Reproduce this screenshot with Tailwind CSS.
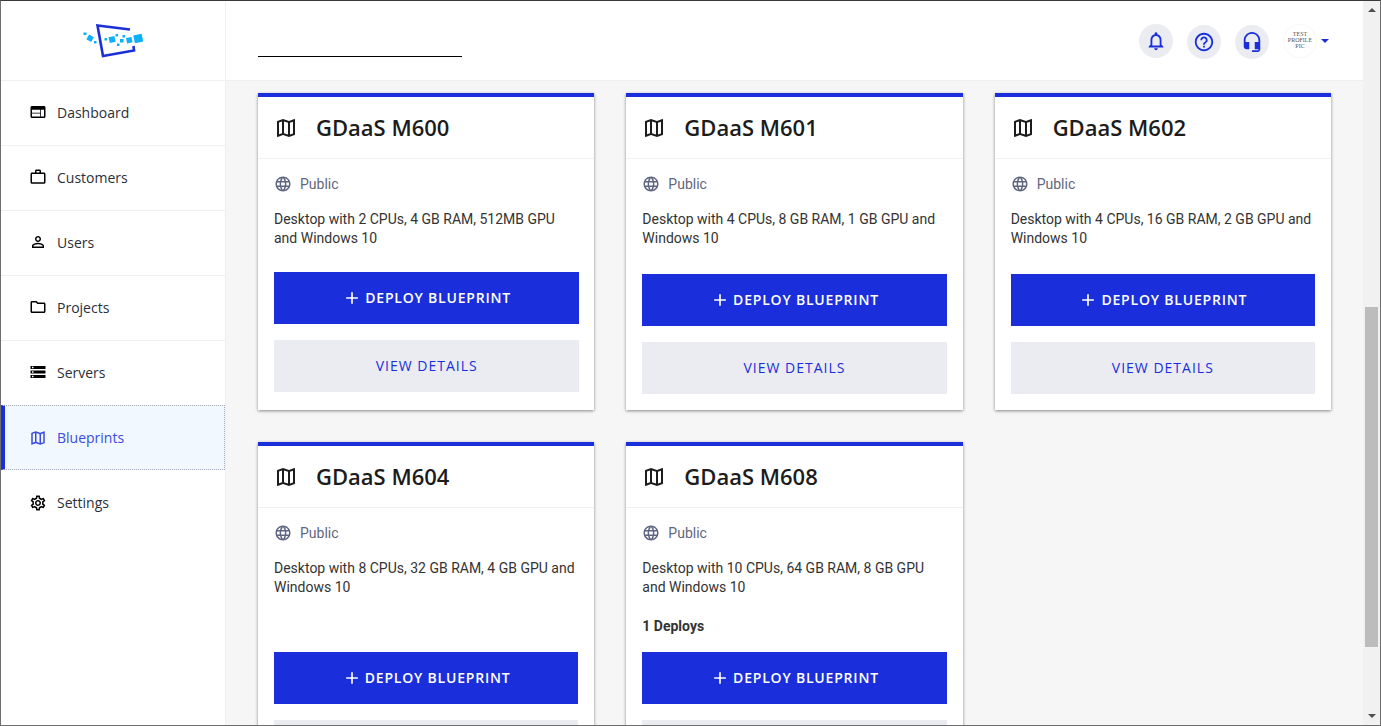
<!DOCTYPE html>
<html lang="en">

<head>
    <meta charset="UTF-8">
    <meta name="viewport" content="width=device-width, initial-scale=1.0">
    <title>Blueprints</title>
    <script src="https://cdn.jsdelivr.net/npm/@tailwindcss/browser@4"></script>
</head>

<body class="bg-white font-['Open_Sans',sans-serif] overflow-hidden">
<div class="flex w-[1381px] h-[726px] overflow-hidden border border-[#6e6e6e] border-t-[#3a3a3a]">

    <!-- sidebar -->
    <aside class="w-[225px] shrink-0 bg-white border-r border-[#eeeff3] flex flex-col">
        <div class="h-[80px] shrink-0 border-b border-[#eeeff3]">
            <svg width="224" height="79" viewBox="1 1 224 79" class="block">
                <path d="M130 29.5L97.5 25.5L103 56L134 50.5L133.5 46" fill="none" stroke="#1b30d8" stroke-width="2.6"/>
                <g fill="#0fb0fb">
                    <rect x="134" y="34.5" width="8.5" height="8" transform="rotate(-12 138 38.5)"/>
                    <rect x="126.5" y="37.5" width="5.5" height="5.5" transform="rotate(-12 129 40)"/>
                    <rect x="109" y="36.5" width="6" height="6" transform="rotate(-12 112 39)"/>
                    <rect x="87.5" y="35.5" width="5.5" height="5.5" transform="rotate(30 90 38)"/>
                    <rect x="83.5" y="32.5" width="3" height="2.5"/>
                    <rect x="94" y="41" width="2.5" height="2.5"/>
                    <rect x="104.5" y="38" width="2.5" height="2.5"/>
                    <rect x="115.5" y="34" width="2.5" height="2.5"/>
                    <rect x="117" y="43.5" width="2.5" height="2.5"/>
                    <rect x="122.5" y="35" width="2.5" height="2.5"/>
                    <rect x="120" y="39" width="3.5" height="3.5"/>
                </g>
            </svg>
        </div>
        <nav class="flex flex-col text-[14px] text-[#2a2f3a]">
            <a href="#" class="h-[65px] flex items-center gap-[10px] pl-[28px] pb-[2px] border-b border-[#eeeff3]">
                <svg class="w-[18px] h-[18px]" viewBox="0 0 24 24" fill="#000"><path d="M20 4H4c-1.1 0-2 .9-2 2v12c0 1.1.9 2 2 2h16c1.1 0 2-.9 2-2V6c0-1.1-.9-2-2-2zm-5 14H4v-4h11v4zm0-5H4V9h11v4zm5 5h-4V9h4v9z"/></svg>
                <span>Dashboard</span>
            </a>
            <a href="#" class="h-[65px] flex items-center gap-[10px] pl-[28px] pb-[2px] border-b border-[#eeeff3]">
                <svg class="w-[18px] h-[18px]" viewBox="0 0 24 24" fill="#000"><path d="M14 6V4h-4v2h4zM4 8v11h16V8H4zm16-2c1.11 0 2 .89 2 2v11c0 1.11-.89 2-2 2H4c-1.11 0-2-.89-2-2l.01-11c0-1.11.88-2 1.99-2h4V4c0-1.11.89-2 2-2h4c1.11 0 2 .89 2 2v2h4z"/></svg>
                <span>Customers</span>
            </a>
            <a href="#" class="h-[65px] flex items-center gap-[10px] pl-[28px] pb-[2px] border-b border-[#eeeff3]">
                <svg class="w-[18px] h-[18px]" viewBox="0 0 24 24" fill="#000"><path d="M12 5.9c1.16 0 2.1.94 2.1 2.1s-.94 2.1-2.1 2.1S9.9 9.16 9.9 8s.94-2.1 2.1-2.1m0 9c2.97 0 6.1 1.46 6.1 2.1v1.1H5.9V17c0-.64 3.13-2.1 6.1-2.1M12 4C9.79 4 8 5.79 8 8s1.79 4 4 4 4-1.79 4-4-1.79-4-4-4zm0 9c-2.67 0-8 1.34-8 4v3h16v-3c0-2.66-5.33-4-8-4z"/></svg>
                <span>Users</span>
            </a>
            <a href="#" class="h-[65px] flex items-center gap-[10px] pl-[28px] pb-[2px] border-b border-[#eeeff3]">
                <svg class="w-[18px] h-[18px]" viewBox="0 0 24 24" fill="#000"><path d="M9.17 6l2 2H20v10H4V6h5.17M10 4H4c-1.1 0-1.99.9-1.99 2L2 18c0 1.1.9 2 2 2h16c1.1 0 2-.9 2-2V8c0-1.1-.9-2-2-2h-8l-2-2z"/></svg>
                <span>Projects</span>
            </a>
            <a href="#" class="h-[64px] flex items-center gap-[10px] pl-[28px] pb-[2px]">
                <svg class="w-[18px] h-[18px]" viewBox="0 0 24 24" fill="#000"><path d="M2 20h20v-4H2v4zm2-3h2v2H4v-2zM2 4v4h20V4H2zm4 3H4V5h2v2zm-4 7h20v-4H2v4zm2-3h2v2H4v-2z"/></svg>
                <span>Servers</span>
            </a>
            <!-- active item -->
            <a href="#" class="h-[65px] flex items-center gap-[10px] pl-[24px] bg-[#f1f8ff] text-[#3a4be0] border-l-4 border-l-[#1a2fdb] border-y border-r border-y-[#a3a9b8] border-r-[#a3a9b8] border-dotted [border-left-style:solid]">
                <svg class="w-[18px] h-[18px]" viewBox="0 0 24 24" fill="#3a4be0"><path d="M20.5 3l-.16.03L15 5.1 9 3 3.36 4.9c-.21.07-.36.25-.36.48V20.5c0 .28.22.5.5.5l.16-.03L9 18.9l6 2.1 5.64-1.9c.21-.07.36-.25.36-.48V3.5c0-.28-.22-.5-.5-.5zM10 5.47l4 1.4v11.66l-4-1.4V5.47zm-5 .99l3-1.01v11.7l-3 1.16V6.46zm14 11.08l-3 1.01V6.86l3-1.16v11.84z"/></svg>
                <span>Blueprints</span>
            </a>
            <a href="#" class="h-[65px] flex items-center gap-[10px] pl-[28px]">
                <svg class="w-[18px] h-[18px]" viewBox="0 0 24 24" fill="#000"><path d="M19.43 12.98c.04-.32.07-.64.07-.98 0-.34-.03-.66-.07-.98l2.11-1.65c.19-.15.24-.42.12-.64l-2-3.46c-.09-.16-.26-.25-.44-.25-.06 0-.12.01-.17.03l-2.49 1c-.52-.4-1.08-.73-1.69-.98l-.38-2.65C14.46 2.18 14.25 2 14 2h-4c-.25 0-.46.18-.49.42l-.38 2.65c-.61.25-1.17.59-1.69.98l-2.49-1c-.06-.02-.12-.03-.18-.03-.17 0-.34.09-.43.25l-2 3.46c-.13.22-.07.49.12.64l2.11 1.65c-.04.32-.07.65-.07.98 0 .33.03.66.07.98l-2.11 1.65c-.19.15-.24.42-.12.64l2 3.46c.09.16.26.25.44.25.06 0 .12-.01.17-.03l2.49-1c.52.4 1.08.73 1.69.98l.38 2.65c.03.24.24.42.49.42h4c.25 0 .46-.18.49-.42l.38-2.65c.61-.25 1.17-.59 1.69-.98l2.49 1c.06.02.12.03.18.03.17 0 .34-.09.43-.25l2-3.46c.12-.22.07-.49-.12-.64l-2.11-1.65zm-1.98-1.71c.04.31.05.52.05.73 0 .21-.02.43-.05.73l-.14 1.13.89.7 1.08.84-.7 1.21-1.27-.51-1.04-.42-.9.68c-.43.32-.84.56-1.25.73l-1.06.43-.16 1.13-.2 1.35h-1.4l-.19-1.35-.16-1.13-1.06-.43c-.43-.18-.83-.41-1.23-.71l-.91-.7-1.06.43-1.27.51-.7-1.21 1.08-.84.89-.7-.14-1.13c-.03-.31-.05-.54-.05-.74s.02-.43.05-.73l.14-1.13-.89-.7-1.08-.84.7-1.21 1.27.51 1.04.42.9-.68c.43-.32.84-.56 1.25-.73l1.06-.43.16-1.13.2-1.35h1.39l.19 1.35.16 1.13 1.06.43c.43.18.83.41 1.23.71l.91.7 1.06-.43 1.27-.51.7 1.21-1.07.85-.89.7.14 1.13zM12 8c-2.21 0-4 1.79-4 4s1.79 4 4 4 4-1.79 4-4-1.79-4-4-4zm0 6c-1.1 0-2-.9-2-2s.9-2 2-2 2 .9 2 2-.9 2-2 2z"/></svg>
                <span>Settings</span>
            </a>
        </nav>
    </aside>

    <!-- main column -->
    <div class="flex-1 min-w-0 flex flex-col bg-[#f6f6f6]">
        <header class="h-[80px] shrink-0 bg-white border-b border-[#eeeff3] flex items-start justify-between pl-[32px] pr-[34px]">
            <div class="w-[204px] h-[56px] border-b border-black"></div>
            <div class="flex items-start gap-[14px] pt-[24px]">
                <button class="w-[34px] h-[34px] rounded-full bg-[#ebecf1] flex items-center justify-center -mt-[1px]">
                    <svg class="w-[22px] h-[22px]" viewBox="0 0 24 24" fill="#1a2fdb"><path d="M12 22c1.1 0 2-.9 2-2h-4c0 1.1.9 2 2 2zm6-6v-5c0-3.07-1.63-5.64-4.5-6.32V4c0-.83-.67-1.5-1.5-1.5s-1.5.67-1.5 1.5v.68C7.64 5.36 6 7.92 6 11v5l-2 2v1h16v-1l-2-2zm-2 1H8v-6c0-2.48 1.51-4.5 4-4.5s4 2.02 4 4.5v6z"/></svg>
                </button>
                <button class="w-[34px] h-[34px] rounded-full bg-[#ebecf1] flex items-center justify-center">
                    <svg class="w-[22px] h-[22px]" viewBox="0 0 24 24" fill="#1a2fdb"><path d="M11 18h2v-2h-2v2zm1-16C6.48 2 2 6.48 2 12s4.48 10 10 10 10-4.48 10-10S17.52 2 12 2zm0 18c-4.41 0-8-3.59-8-8s3.59-8 8-8 8 3.59 8 8-3.59 8-8 8zm0-14c-2.21 0-4 1.79-4 4h2c0-1.1.9-2 2-2s2 .9 2 2c0 2-3 1.75-3 5h2c0-2.25 3-2.5 3-5 0-2.21-1.79-4-4-4z"/></svg>
                </button>
                <button class="w-[34px] h-[34px] rounded-full bg-[#ebecf1] flex items-center justify-center">
                    <svg class="w-[22px] h-[22px]" viewBox="0 0 24 24" fill="#1a2fdb"><path d="M12 1c-4.97 0-9 4.03-9 9v7c0 1.66 1.34 3 3 3h3v-8H5v-2c0-3.87 3.13-7 7-7s7 3.13 7 7v2h-4v8h4v1h-7v2h6c1.66 0 3-1.34 3-3V10c0-4.97-4.03-9-9-9z"/></svg>
                </button>
                <div class="flex items-center gap-[4px] -mt-[1px]">
                    <div class="w-[34px] h-[34px] pb-[2px] rounded-full bg-white border border-[#f7f7f9] flex items-center justify-center text-center font-['Liberation_Serif',serif] text-[6px] leading-[6px] text-[#555]">TEST PROFILE PIC</div>
                    <div class="w-0 h-0 border-x-[4px] border-x-transparent border-t-[4px] border-t-[#1a2fdb]"></div>
                </div>
            </div>
        </header>

        <main class="flex-1 min-h-0 overflow-hidden pt-[12px] pl-[32px] pr-[32px]">
            <div class="grid grid-cols-3 gap-[32px] font-['Roboto',sans-serif]">

                <section class="bg-white border-t-4 border-[#1a2fdb] shadow-[0_1px_3px_rgba(0,0,0,0.45)] flex flex-col pb-[18px]">
                    <div class="h-[62px] shrink-0 border-b border-[#f1f1f1] flex items-center gap-[18px] px-[16px]">
                        <svg class="w-[24px] h-[24px]" viewBox="0 0 24 24" fill="#1c1c1c"><path d="M20.5 3l-.16.03L15 5.1 9 3 3.36 4.9c-.21.07-.36.25-.36.48V20.5c0 .28.22.5.5.5l.16-.03L9 18.9l6 2.1 5.64-1.9c.21-.07.36-.25.36-.48V3.5c0-.28-.22-.5-.5-.5zM10 5.47l4 1.4v11.66l-4-1.4V5.47zm-5 .99l3-1.01v11.7l-3 1.16V6.46zm14 11.08l-3 1.01V6.86l3-1.16v11.84z"/></svg>
                        <h2 class="font-['Open_Sans',sans-serif] text-[22px] font-semibold text-[#1c1c1c]">GDaaS M600</h2>
                    </div>
                    <div class="px-[16px] pt-[15px] flex items-center gap-[8px] text-[14px] leading-[20px] text-[#5f6780]">
                        <svg class="w-[18px] h-[18px]" viewBox="0 0 24 24" fill="#5f6780"><path d="M11.99 2C6.47 2 2 6.48 2 12s4.47 10 9.99 10C17.52 22 22 17.52 22 12S17.52 2 11.99 2zm6.93 6h-2.95c-.32-1.25-.78-2.45-1.38-3.56 1.84.63 3.37 1.91 4.33 3.56zM12 4.04c.83 1.2 1.48 2.53 1.91 3.96h-3.82c.43-1.43 1.08-2.76 1.91-3.96zM4.26 14C4.1 13.36 4 12.69 4 12s.1-1.36.26-2h3.38c-.08.66-.14 1.32-.14 2 0 .68.06 1.34.14 2H4.26zm.82 2h2.95c.32 1.25.78 2.45 1.38 3.56-1.84-.63-3.37-1.9-4.33-3.56zm2.95-8H5.08c.96-1.66 2.49-2.93 4.33-3.56C8.81 5.55 8.35 6.75 8.03 8zM12 19.96c-.83-1.2-1.48-2.53-1.91-3.96h3.82c-.43 1.43-1.08 2.76-1.91 3.96zM14.34 14H9.66c-.09-.66-.16-1.32-.16-2 0-.68.07-1.35.16-2h4.68c.09.65.16 1.32.16 2 0 .68-.07 1.34-.16 2zm.25 5.56c.6-1.11 1.06-2.31 1.38-3.56h2.95c-.96 1.65-2.49 2.93-4.33 3.56zM16.36 14c.08-.66.14-1.32.14-2 0-.68-.06-1.34-.14-2h3.38c.16.64.26 1.31.26 2s-.1 1.36-.26 2h-3.38z"/></svg>
                        <span>Public</span>
                    </div>
                    <p class="px-[16px] mt-[16px] text-[14px] leading-[19px] text-[#333]">Desktop with 2 CPUs, 4 GB RAM, 512MB GPU and Windows 10</p>
                    <div class="mt-auto pl-[16px] pr-[15px] pt-[24px] flex flex-col gap-[16px] font-['Open_Sans',sans-serif] text-[14px]">
                        <button class="h-[52px] pb-[2px] bg-[#1a2fdb] text-white font-semibold tracking-[0.8px] flex items-center justify-center gap-[3px]">
                            <svg class="w-[20px] h-[20px] mt-[2px]" viewBox="0 0 24 24" fill="#fff"><path d="M19 13h-6v6h-2v-6H5v-2h6V5h2v6h6v2z"/></svg>
                            <span>DEPLOY BLUEPRINT</span>
                        </button>
                        <button class="h-[52px] pb-[2px] bg-[#ebecf1] text-[#1a2fdb] tracking-[1px]">VIEW DETAILS</button>
                    </div>
                </section>

                <section class="bg-white border-t-4 border-[#1a2fdb] shadow-[0_1px_3px_rgba(0,0,0,0.45)] flex flex-col pb-[16px]">
                    <div class="h-[62px] shrink-0 border-b border-[#f1f1f1] flex items-center gap-[18px] px-[16px]">
                        <svg class="w-[24px] h-[24px]" viewBox="0 0 24 24" fill="#1c1c1c"><path d="M20.5 3l-.16.03L15 5.1 9 3 3.36 4.9c-.21.07-.36.25-.36.48V20.5c0 .28.22.5.5.5l.16-.03L9 18.9l6 2.1 5.64-1.9c.21-.07.36-.25.36-.48V3.5c0-.28-.22-.5-.5-.5zM10 5.47l4 1.4v11.66l-4-1.4V5.47zm-5 .99l3-1.01v11.7l-3 1.16V6.46zm14 11.08l-3 1.01V6.86l3-1.16v11.84z"/></svg>
                        <h2 class="font-['Open_Sans',sans-serif] text-[22px] font-semibold text-[#1c1c1c]">GDaaS M601</h2>
                    </div>
                    <div class="px-[16px] pt-[15px] flex items-center gap-[8px] text-[14px] leading-[20px] text-[#5f6780]">
                        <svg class="w-[18px] h-[18px]" viewBox="0 0 24 24" fill="#5f6780"><path d="M11.99 2C6.47 2 2 6.48 2 12s4.47 10 9.99 10C17.52 22 22 17.52 22 12S17.52 2 11.99 2zm6.93 6h-2.95c-.32-1.25-.78-2.45-1.38-3.56 1.84.63 3.37 1.91 4.33 3.56zM12 4.04c.83 1.2 1.48 2.53 1.91 3.96h-3.82c.43-1.43 1.08-2.76 1.91-3.96zM4.26 14C4.1 13.36 4 12.69 4 12s.1-1.36.26-2h3.38c-.08.66-.14 1.32-.14 2 0 .68.06 1.34.14 2H4.26zm.82 2h2.95c.32 1.25.78 2.45 1.38 3.56-1.84-.63-3.37-1.9-4.33-3.56zm2.95-8H5.08c.96-1.66 2.49-2.93 4.33-3.56C8.81 5.55 8.35 6.75 8.03 8zM12 19.96c-.83-1.2-1.48-2.53-1.91-3.96h3.82c-.43 1.43-1.08 2.76-1.91 3.96zM14.34 14H9.66c-.09-.66-.16-1.32-.16-2 0-.68.07-1.35.16-2h4.68c.09.65.16 1.32.16 2 0 .68-.07 1.34-.16 2zm.25 5.56c.6-1.11 1.06-2.31 1.38-3.56h2.95c-.96 1.65-2.49 2.93-4.33 3.56zM16.36 14c.08-.66.14-1.32.14-2 0-.68-.06-1.34-.14-2h3.38c.16.64.26 1.31.26 2s-.1 1.36-.26 2h-3.38z"/></svg>
                        <span>Public</span>
                    </div>
                    <p class="px-[16px] mt-[16px] text-[14px] leading-[19px] text-[#333]">Desktop with 4 CPUs, 8 GB RAM, 1 GB GPU and Windows 10</p>
                    <div class="mt-auto px-[16px] pt-[26px] flex flex-col gap-[16px] font-['Open_Sans',sans-serif] text-[14px]">
                        <button class="h-[52px] pb-[2px] bg-[#1a2fdb] text-white font-semibold tracking-[0.8px] flex items-center justify-center gap-[3px]">
                            <svg class="w-[20px] h-[20px] mt-[2px]" viewBox="0 0 24 24" fill="#fff"><path d="M19 13h-6v6h-2v-6H5v-2h6V5h2v6h6v2z"/></svg>
                            <span>DEPLOY BLUEPRINT</span>
                        </button>
                        <button class="h-[52px] pb-[2px] bg-[#ebecf1] text-[#1a2fdb] tracking-[1px]">VIEW DETAILS</button>
                    </div>
                </section>

                <section class="bg-white border-t-4 border-[#1a2fdb] shadow-[0_1px_3px_rgba(0,0,0,0.45)] flex flex-col pb-[16px]">
                    <div class="h-[62px] shrink-0 border-b border-[#f1f1f1] flex items-center gap-[18px] px-[16px]">
                        <svg class="w-[24px] h-[24px]" viewBox="0 0 24 24" fill="#1c1c1c"><path d="M20.5 3l-.16.03L15 5.1 9 3 3.36 4.9c-.21.07-.36.25-.36.48V20.5c0 .28.22.5.5.5l.16-.03L9 18.9l6 2.1 5.64-1.9c.21-.07.36-.25.36-.48V3.5c0-.28-.22-.5-.5-.5zM10 5.47l4 1.4v11.66l-4-1.4V5.47zm-5 .99l3-1.01v11.7l-3 1.16V6.46zm14 11.08l-3 1.01V6.86l3-1.16v11.84z"/></svg>
                        <h2 class="font-['Open_Sans',sans-serif] text-[22px] font-semibold text-[#1c1c1c]">GDaaS M602</h2>
                    </div>
                    <div class="px-[16px] pt-[15px] flex items-center gap-[8px] text-[14px] leading-[20px] text-[#5f6780]">
                        <svg class="w-[18px] h-[18px]" viewBox="0 0 24 24" fill="#5f6780"><path d="M11.99 2C6.47 2 2 6.48 2 12s4.47 10 9.99 10C17.52 22 22 17.52 22 12S17.52 2 11.99 2zm6.93 6h-2.95c-.32-1.25-.78-2.45-1.38-3.56 1.84.63 3.37 1.91 4.33 3.56zM12 4.04c.83 1.2 1.48 2.53 1.91 3.96h-3.82c.43-1.43 1.08-2.76 1.91-3.96zM4.26 14C4.1 13.36 4 12.69 4 12s.1-1.36.26-2h3.38c-.08.66-.14 1.32-.14 2 0 .68.06 1.34.14 2H4.26zm.82 2h2.95c.32 1.25.78 2.45 1.38 3.56-1.84-.63-3.37-1.9-4.33-3.56zm2.95-8H5.08c.96-1.66 2.49-2.93 4.33-3.56C8.81 5.55 8.35 6.75 8.03 8zM12 19.96c-.83-1.2-1.48-2.53-1.91-3.96h3.82c-.43 1.43-1.08 2.76-1.91 3.96zM14.34 14H9.66c-.09-.66-.16-1.32-.16-2 0-.68.07-1.35.16-2h4.68c.09.65.16 1.32.16 2 0 .68-.07 1.34-.16 2zm.25 5.56c.6-1.11 1.06-2.31 1.38-3.56h2.95c-.96 1.65-2.49 2.93-4.33 3.56zM16.36 14c.08-.66.14-1.32.14-2 0-.68-.06-1.34-.14-2h3.38c.16.64.26 1.31.26 2s-.1 1.36-.26 2h-3.38z"/></svg>
                        <span>Public</span>
                    </div>
                    <p class="px-[16px] mt-[16px] text-[14px] leading-[19px] text-[#333]">Desktop with 4 CPUs, 16 GB RAM, 2 GB GPU and Windows 10</p>
                    <div class="mt-auto px-[16px] pt-[26px] flex flex-col gap-[16px] font-['Open_Sans',sans-serif] text-[14px]">
                        <button class="h-[52px] pb-[2px] bg-[#1a2fdb] text-white font-semibold tracking-[0.8px] flex items-center justify-center gap-[3px]">
                            <svg class="w-[20px] h-[20px] mt-[2px]" viewBox="0 0 24 24" fill="#fff"><path d="M19 13h-6v6h-2v-6H5v-2h6V5h2v6h6v2z"/></svg>
                            <span>DEPLOY BLUEPRINT</span>
                        </button>
                        <button class="h-[52px] pb-[2px] bg-[#ebecf1] text-[#1a2fdb] tracking-[1px]">VIEW DETAILS</button>
                    </div>
                </section>

                <section class="bg-white border-t-4 border-[#1a2fdb] shadow-[0_1px_3px_rgba(0,0,0,0.45)] flex flex-col pb-[16px]">
                    <div class="h-[62px] shrink-0 border-b border-[#f1f1f1] flex items-center gap-[18px] px-[16px]">
                        <svg class="w-[24px] h-[24px]" viewBox="0 0 24 24" fill="#1c1c1c"><path d="M20.5 3l-.16.03L15 5.1 9 3 3.36 4.9c-.21.07-.36.25-.36.48V20.5c0 .28.22.5.5.5l.16-.03L9 18.9l6 2.1 5.64-1.9c.21-.07.36-.25.36-.48V3.5c0-.28-.22-.5-.5-.5zM10 5.47l4 1.4v11.66l-4-1.4V5.47zm-5 .99l3-1.01v11.7l-3 1.16V6.46zm14 11.08l-3 1.01V6.86l3-1.16v11.84z"/></svg>
                        <h2 class="font-['Open_Sans',sans-serif] text-[22px] font-semibold text-[#1c1c1c]">GDaaS M604</h2>
                    </div>
                    <div class="px-[16px] pt-[15px] flex items-center gap-[8px] text-[14px] leading-[20px] text-[#5f6780]">
                        <svg class="w-[18px] h-[18px]" viewBox="0 0 24 24" fill="#5f6780"><path d="M11.99 2C6.47 2 2 6.48 2 12s4.47 10 9.99 10C17.52 22 22 17.52 22 12S17.52 2 11.99 2zm6.93 6h-2.95c-.32-1.25-.78-2.45-1.38-3.56 1.84.63 3.37 1.91 4.33 3.56zM12 4.04c.83 1.2 1.48 2.53 1.91 3.96h-3.82c.43-1.43 1.08-2.76 1.91-3.96zM4.26 14C4.1 13.36 4 12.69 4 12s.1-1.36.26-2h3.38c-.08.66-.14 1.32-.14 2 0 .68.06 1.34.14 2H4.26zm.82 2h2.95c.32 1.25.78 2.45 1.38 3.56-1.84-.63-3.37-1.9-4.33-3.56zm2.95-8H5.08c.96-1.66 2.49-2.93 4.33-3.56C8.81 5.55 8.35 6.75 8.03 8zM12 19.96c-.83-1.2-1.48-2.53-1.91-3.96h3.82c-.43 1.43-1.08 2.76-1.91 3.96zM14.34 14H9.66c-.09-.66-.16-1.32-.16-2 0-.68.07-1.35.16-2h4.68c.09.65.16 1.32.16 2 0 .68-.07 1.34-.16 2zm.25 5.56c.6-1.11 1.06-2.31 1.38-3.56h2.95c-.96 1.65-2.49 2.93-4.33 3.56zM16.36 14c.08-.66.14-1.32.14-2 0-.68-.06-1.34-.14-2h3.38c.16.64.26 1.31.26 2s-.1 1.36-.26 2h-3.38z"/></svg>
                        <span>Public</span>
                    </div>
                    <p class="px-[16px] mt-[16px] text-[14px] leading-[19px] text-[#333]">Desktop with 8 CPUs, 32 GB RAM, 4 GB GPU and Windows 10</p>
                    <div class="mt-auto px-[16px] pt-[26px] flex flex-col gap-[16px] font-['Open_Sans',sans-serif] text-[14px]">
                        <button class="h-[52px] pb-[2px] bg-[#1a2fdb] text-white font-semibold tracking-[0.8px] flex items-center justify-center gap-[3px]">
                            <svg class="w-[20px] h-[20px] mt-[2px]" viewBox="0 0 24 24" fill="#fff"><path d="M19 13h-6v6h-2v-6H5v-2h6V5h2v6h6v2z"/></svg>
                            <span>DEPLOY BLUEPRINT</span>
                        </button>
                        <button class="h-[52px] pb-[2px] bg-[#ebecf1] text-[#1a2fdb] tracking-[1px]">VIEW DETAILS</button>
                    </div>
                </section>

                <section class="bg-white border-t-4 border-[#1a2fdb] shadow-[0_1px_3px_rgba(0,0,0,0.45)] flex flex-col pb-[16px]">
                    <div class="h-[62px] shrink-0 border-b border-[#f1f1f1] flex items-center gap-[18px] px-[16px]">
                        <svg class="w-[24px] h-[24px]" viewBox="0 0 24 24" fill="#1c1c1c"><path d="M20.5 3l-.16.03L15 5.1 9 3 3.36 4.9c-.21.07-.36.25-.36.48V20.5c0 .28.22.5.5.5l.16-.03L9 18.9l6 2.1 5.64-1.9c.21-.07.36-.25.36-.48V3.5c0-.28-.22-.5-.5-.5zM10 5.47l4 1.4v11.66l-4-1.4V5.47zm-5 .99l3-1.01v11.7l-3 1.16V6.46zm14 11.08l-3 1.01V6.86l3-1.16v11.84z"/></svg>
                        <h2 class="font-['Open_Sans',sans-serif] text-[22px] font-semibold text-[#1c1c1c]">GDaaS M608</h2>
                    </div>
                    <div class="px-[16px] pt-[15px] flex items-center gap-[8px] text-[14px] leading-[20px] text-[#5f6780]">
                        <svg class="w-[18px] h-[18px]" viewBox="0 0 24 24" fill="#5f6780"><path d="M11.99 2C6.47 2 2 6.48 2 12s4.47 10 9.99 10C17.52 22 22 17.52 22 12S17.52 2 11.99 2zm6.93 6h-2.95c-.32-1.25-.78-2.45-1.38-3.56 1.84.63 3.37 1.91 4.33 3.56zM12 4.04c.83 1.2 1.48 2.53 1.91 3.96h-3.82c.43-1.43 1.08-2.76 1.91-3.96zM4.26 14C4.1 13.36 4 12.69 4 12s.1-1.36.26-2h3.38c-.08.66-.14 1.32-.14 2 0 .68.06 1.34.14 2H4.26zm.82 2h2.95c.32 1.25.78 2.45 1.38 3.56-1.84-.63-3.37-1.9-4.33-3.56zm2.95-8H5.08c.96-1.66 2.49-2.93 4.33-3.56C8.81 5.55 8.35 6.75 8.03 8zM12 19.96c-.83-1.2-1.48-2.53-1.91-3.96h3.82c-.43 1.43-1.08 2.76-1.91 3.96zM14.34 14H9.66c-.09-.66-.16-1.32-.16-2 0-.68.07-1.35.16-2h4.68c.09.65.16 1.32.16 2 0 .68-.07 1.34-.16 2zm.25 5.56c.6-1.11 1.06-2.31 1.38-3.56h2.95c-.96 1.65-2.49 2.93-4.33 3.56zM16.36 14c.08-.66.14-1.32.14-2 0-.68-.06-1.34-.14-2h3.38c.16.64.26 1.31.26 2s-.1 1.36-.26 2h-3.38z"/></svg>
                        <span>Public</span>
                    </div>
                    <p class="px-[16px] mt-[16px] text-[14px] leading-[19px] text-[#333]">Desktop with 10 CPUs, 64 GB RAM, 8 GB GPU and Windows 10</p>
                    <p class="px-[16px] mt-[20px] text-[14px] leading-[19px] font-bold text-[#333]">1 Deploys</p>
                    <div class="mt-auto px-[16px] pt-[16px] flex flex-col gap-[16px] font-['Open_Sans',sans-serif] text-[14px]">
                        <button class="h-[52px] pb-[2px] bg-[#1a2fdb] text-white font-semibold tracking-[0.8px] flex items-center justify-center gap-[3px]">
                            <svg class="w-[20px] h-[20px] mt-[2px]" viewBox="0 0 24 24" fill="#fff"><path d="M19 13h-6v6h-2v-6H5v-2h6V5h2v6h6v2z"/></svg>
                            <span>DEPLOY BLUEPRINT</span>
                        </button>
                        <button class="h-[52px] pb-[2px] bg-[#ebecf1] text-[#1a2fdb] tracking-[1px]">VIEW DETAILS</button>
                    </div>
                </section>
            </div>
        </main>
    </div>

    <!-- page scrollbar -->
    <div class="w-[17px] shrink-0 bg-[#f1f1f1] flex flex-col items-center pt-[7px] pb-[7px]">
        <div class="w-0 h-0 border-x-[4px] border-x-transparent border-b-[4px] border-b-[#505050]"></div>
        <div class="flex-1 w-full px-[2px] pt-[295px] pb-[67px]">
            <div class="h-full bg-[#bcbcbc]"></div>
        </div>
        <div class="w-0 h-0 border-x-[4px] border-x-transparent border-t-[4px] border-t-[#505050]"></div>
    </div>
</div>
</body>

</html>
